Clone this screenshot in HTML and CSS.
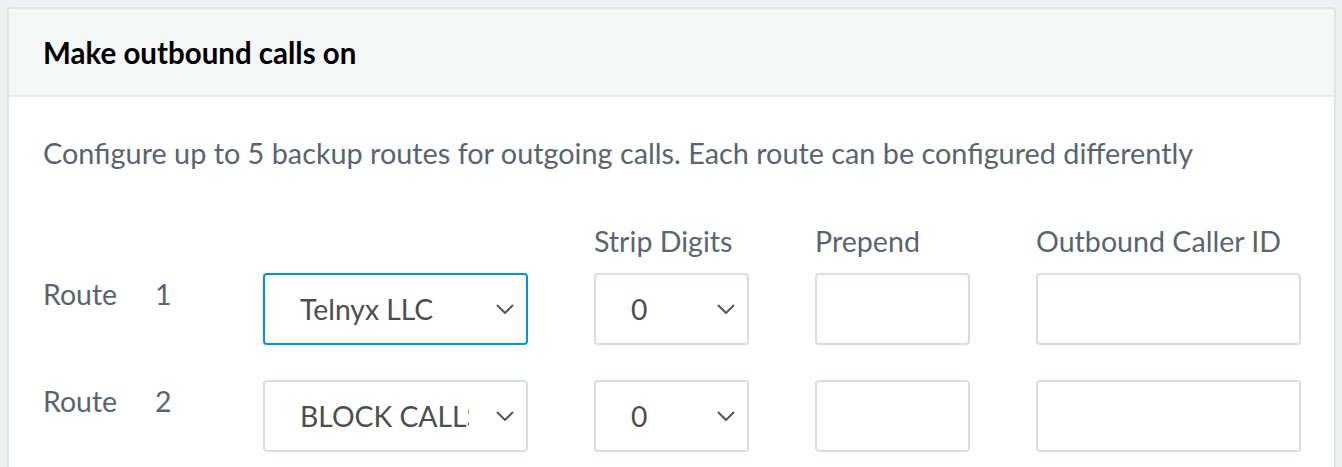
FILE: index.html
```html
<!DOCTYPE html>
<html lang="en">
<head>
<meta charset="utf-8">
<title>Outbound routes</title>
<link rel="stylesheet" href="styles.css">
</head>
<body>
<section class="card">
  <header class="card-header">
    <h2 class="card-title">Make outbound calls on</h2>
  </header>
  <div class="card-body">
    <p class="desc">Configure up to 5 backup routes for outgoing calls. Each route can be configured differently</p>
    <div class="routes">
      <div class="col-label"></div>
      <div class="col-label"></div>
      <div class="col-label">Strip Digits</div>
      <div class="col-label">Prepend</div>
      <div class="col-label">Outbound Caller ID</div>

      <div class="route-name"><span class="route-word">Route</span><span>1</span></div>
      <div class="select focused"><span class="value">Telnyx LLC</span><svg class="chev" viewBox="0 0 18 10" width="18" height="10"><path d="M1 1 L9 9 L17 1" fill="none" stroke="#555" stroke-width="2"/></svg></div>
      <div class="select"><span class="value">0</span><svg class="chev" viewBox="0 0 18 10" width="18" height="10"><path d="M1 1 L9 9 L17 1" fill="none" stroke="#555" stroke-width="2"/></svg></div>
      <div class="input"></div>
      <div class="input"></div>

      <div class="route-name"><span class="route-word">Route</span><span>2</span></div>
      <div class="select"><span class="value">BLOCK CALLS</span><svg class="chev" viewBox="0 0 18 10" width="18" height="10"><path d="M1 1 L9 9 L17 1" fill="none" stroke="#555" stroke-width="2"/></svg></div>
      <div class="select"><span class="value">0</span><svg class="chev" viewBox="0 0 18 10" width="18" height="10"><path d="M1 1 L9 9 L17 1" fill="none" stroke="#555" stroke-width="2"/></svg></div>
      <div class="input"></div>
      <div class="input"></div>
    </div>
  </div>
</section>
</body>
</html>
```
FILE: styles.css
```css
html, body {
  margin: 0;
  padding: 0;
}
body {
  background: #eef1f2;
  padding: 7px 6px 0 7px;
  font-family: Lato, "Liberation Sans", sans-serif;
  height: 467px;
  box-sizing: border-box;
  overflow: hidden;
}
.card {
  background: #ffffff;
  border: 2px solid #dfe4e6;
  border-bottom: none;
  border-radius: 4px 4px 0 0;
  height: 100%;
  box-sizing: border-box;
}
.card-header {
  background: #f5f7f7;
  height: 86px;
  border-bottom: 2px solid #e7ebec;
  display: flex;
  align-items: center;
  padding-left: 34px;
  border-radius: 3px 3px 0 0;
}
.card-title {
  margin: 0;
  font-size: 29.5px;
  font-weight: 700;
  color: #000;
  line-height: 40px;
  padding-top: 1px;
}
.card-body {
  padding: 36px 34px 0 34px;
  color: #58656f;
}
.desc {
  margin: 0;
  font-size: 28.8px;
  line-height: 40px;
}
.routes {
  margin-top: 48px;
  display: grid;
  grid-template-columns: 154px 265px 155px 155px 265px;
  column-gap: 66px;
  grid-auto-rows: auto;
}
.col-label {
  font-size: 28.6px;
  line-height: 40px;
  margin-bottom: 12px;
}
.route-name {
  display: flex;
  font-size: 28.5px;
  line-height: 40px;
  align-self: start;
  margin-top: 1px;
}
.route-word {
  width: 112px;
}
.select, .input {
  box-sizing: border-box;
  height: 72px;
  border: 2px solid #d6dee1;
  border-radius: 4px;
  background: #fff;
  margin-bottom: 35px;
}
.select {
  display: flex;
  align-items: center;
  padding: 0 12px 0 35px;
  color: #4d4d4d;
  font-size: 28.3px;
}
.select.focused {
  border-color: #0095d4;
}
.value {
  flex: 1;
  overflow: hidden;
  white-space: nowrap;
  margin-right: 27px;
}
.chev {
  flex: none;
  display: block;
}
```
